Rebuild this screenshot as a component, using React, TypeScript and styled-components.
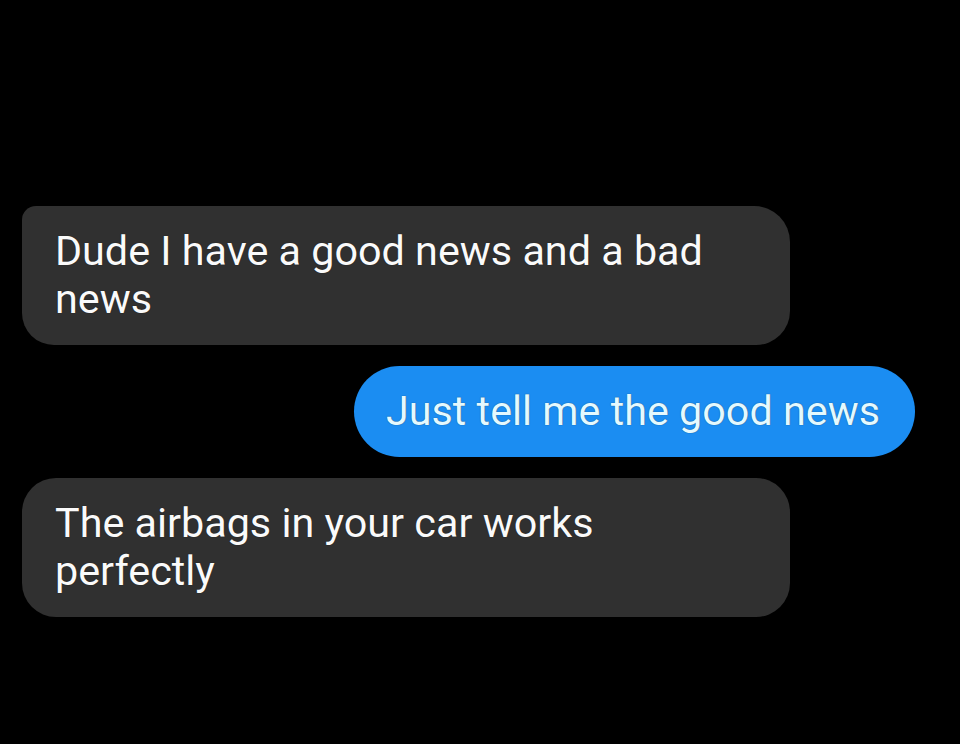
import React, { FC } from "react";
import styled, { createGlobalStyle } from "styled-components";

const GlobalStyle = createGlobalStyle`
  html, body {
    margin: 0;
    padding: 0;
    background: #000;
  }
  body {
    font-family: Roboto, "Liberation Sans", Arial, sans-serif;
  }
`;

interface MessageType {
  id: number;
  text: string;
  mine: boolean;
  first?: boolean;
}

const messages: MessageType[] = [
  { id: 1, text: "Dude I have a good news and a bad news", mine: false, first: true },
  { id: 2, text: "Just tell me the good news", mine: true },
  { id: 3, text: "The airbags in your car works perfectly", mine: false },
];

const Bubble: FC<{ message: MessageType }> = ({ message }) => (
  <Row $mine={message.mine}>
    <BubbleBox $mine={message.mine} $first={!!message.first}>
      {message.text}
    </BubbleBox>
  </Row>
);

const App: FC = () => {
  return (
    <>
      <GlobalStyle />
      <Screen>
        <Thread>
          {messages.map((m) => (
            <Bubble key={m.id} message={m} />
          ))}
        </Thread>
      </Screen>
    </>
  );
};

export default App;

const Screen = styled.div`
  width: 960px;
  height: 744px;
  background: #000;
  overflow: hidden;
`;

const Thread = styled.div`
  display: flex;
  flex-direction: column;
  gap: 21px;
  padding: 206px 45px 0 22px;
`;

const Row = styled.div<{ $mine: boolean }>`
  display: flex;
  justify-content: ${(p) => (p.$mine ? "flex-end" : "flex-start")};
`;

const BubbleBox = styled.div<{ $mine: boolean; $first: boolean }>`
  max-width: 768px;
  box-sizing: border-box;
  padding: ${(p) => (p.$mine ? "21px 35px 22px 32px" : "21px 33px 22px 33px")};
  font-size: 41.3px;
  line-height: 48px;
  color: ${(p) => (p.$mine ? "#e4f9ff" : "#fafafa")};
  text-shadow: 0 0 1px rgba(0, 0, 0, 0.6);
  background: ${(p) => (p.$mine ? "#1b8df2" : "#303030")};
  border-radius: ${(p) => (p.$mine ? "46px" : p.$first ? "14px 36px 34px 32px" : "34px")};
`;
